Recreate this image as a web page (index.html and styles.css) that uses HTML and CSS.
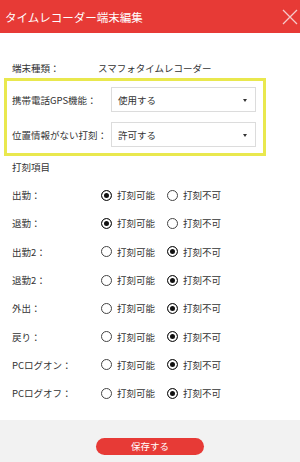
FILE: index.html
```
<!DOCTYPE html>
<html lang="ja">
<head>
    <meta charset="UTF-8">
    <meta name="viewport" content="width=device-width, initial-scale=1.0">
    <title>タイムレコーダー端末編集</title>
    <link rel="stylesheet" href="styles.css">
</head>
<body>
    <div class="dialog">
        <div class="dialog-head">
            <h1 class="title">タイムレコーダー端末編集</h1>
            <a href="JavaScript:;" class="close">
                <svg width="16" height="16" viewBox="0 0 16 16">
                    <path d="M1 1L15 15M15 1L1 15" stroke="#f6c9c9" stroke-width="1.3" fill="none"/>
                </svg>
            </a>
        </div>

        <div class="dialog-body">
            <div class="row">
                <span class="label">端末種類：</span>
                <span class="value">スマフォタイムレコーダー</span>
            </div>

            <!-- 位置情報の設定 -->
            <div class="highlight">
                <div class="row">
                    <span class="label">携帯電話GPS機能：</span>
                    <div class="select">
                        <span>使用する</span>
                        <i class="caret"></i>
                    </div>
                </div>
                <div class="row">
                    <span class="label">位置情報がない打刻：</span>
                    <div class="select">
                        <span>許可する</span>
                        <i class="caret"></i>
                    </div>
                </div>
            </div>

            <div class="section">打刻項目</div>

            <ul class="stamp-list">
                <li>
                    <span class="label">出勤：</span>
                    <label class="opt"><input type="radio" name="r1" checked>打刻可能</label>
                    <label class="opt"><input type="radio" name="r1">打刻不可</label>
                </li>
                <li>
                    <span class="label">退勤：</span>
                    <label class="opt"><input type="radio" name="r2" checked>打刻可能</label>
                    <label class="opt"><input type="radio" name="r2">打刻不可</label>
                </li>
                <li>
                    <span class="label">出勤2：</span>
                    <label class="opt"><input type="radio" name="r3">打刻可能</label>
                    <label class="opt"><input type="radio" name="r3" checked>打刻不可</label>
                </li>
                <li>
                    <span class="label">退勤2：</span>
                    <label class="opt"><input type="radio" name="r4">打刻可能</label>
                    <label class="opt"><input type="radio" name="r4" checked>打刻不可</label>
                </li>
                <li>
                    <span class="label">外出：</span>
                    <label class="opt"><input type="radio" name="r5">打刻可能</label>
                    <label class="opt"><input type="radio" name="r5" checked>打刻不可</label>
                </li>
                <li>
                    <span class="label">戻り：</span>
                    <label class="opt"><input type="radio" name="r6">打刻可能</label>
                    <label class="opt"><input type="radio" name="r6" checked>打刻不可</label>
                </li>
                <li>
                    <span class="label">PCログオン：</span>
                    <label class="opt"><input type="radio" name="r7">打刻可能</label>
                    <label class="opt"><input type="radio" name="r7" checked>打刻不可</label>
                </li>
                <li>
                    <span class="label">PCログオフ：</span>
                    <label class="opt"><input type="radio" name="r8">打刻可能</label>
                    <label class="opt"><input type="radio" name="r8" checked>打刻不可</label>
                </li>
            </ul>
        </div>

        <div class="dialog-foot">
            <a href="JavaScript:;" class="btn-save">保存する</a>
        </div>
    </div>
</body>
</html>
```

FILE: styles.css
```
*{
    margin: 0;
    padding: 0;
    box-sizing: border-box;
}
body{
    font-family: "Noto Sans CJK JP", "Noto Sans", sans-serif;
    font-size: 9.5px;
    color: #333;
    background-color: #fff;
}
.dialog{
    width: 300px;
    height: 462px;
    display: flex;
    flex-direction: column;
}
/* ヘッダー */
.dialog-head{
    height: 33px;
    background-color: #e73a36;
    display: flex;
    align-items: center;
    justify-content: space-between;
    padding: 0 2px 0 5px;
}
.title{
    font-size: 11.5px;
    font-weight: normal;
    color: #fff;
}
.close{
    display: flex;
}
/* 本体 */
.dialog-body{
    flex: 1;
    padding: 25px 4px 0;
}
.row{
    display: flex;
    align-items: center;
    height: 20px;
    padding-left: 8px;
}
.label{
    flex: none;
    width: 86px;
}
.highlight{
    width: 262px;
    margin-top: 0;
    border: 3px solid #e9e84e;
    padding: 6px 0 6px 5px;
    display: flex;
    flex-direction: column;
    gap: 10px;
}
.highlight .row{
    height: 25px;
    padding-left: 0;
}
.highlight .label{
    width: 99px;
}
.select{
    position: relative;
    width: 145px;
    height: 25px;
    border: 1px solid #dcdcdc;
    background-color: #fff;
    display: flex;
    align-items: center;
    padding-left: 6px;
}
.caret{
    position: absolute;
    right: 8px;
    top: 11px;
    border-left: 2.5px solid transparent;
    border-right: 2.5px solid transparent;
    border-top: 3px solid #333;
}
.section{
    height: 20px;
    line-height: 20px;
    margin-top: 1px;
    padding-left: 8px;
}
/* 打刻項目 */
.stamp-list{
    list-style: none;
    margin-top: 4px;
}
.stamp-list li{
    display: flex;
    align-items: center;
    height: 28.3px;
    padding-left: 8px;
}
.stamp-list .label{
    width: 89px;
}
.opt{
    display: flex;
    align-items: center;
    gap: 5px;
    margin-right: 12px;
}
.opt input{
    appearance: none;
    -webkit-appearance: none;
    width: 11px;
    height: 11px;
    border: 1px solid #444;
    border-radius: 50%;
    background-color: #fff;
}
.opt input:checked{
    border-color: #222;
    background-color: #111;
    box-shadow: inset 0 0 0 2px #fff;
}
/* フッター */
.dialog-foot{
    height: 42px;
    background-color: #f2f2f2;
    display: flex;
    justify-content: center;
    padding-top: 18px;
}
.btn-save{
    width: 108px;
    height: 17px;
    line-height: 17px;
    border-radius: 9px;
    background-color: #e73a36;
    color: #fff;
    text-align: center;
    text-decoration: none;
    font-size: 9.5px;
}
```
